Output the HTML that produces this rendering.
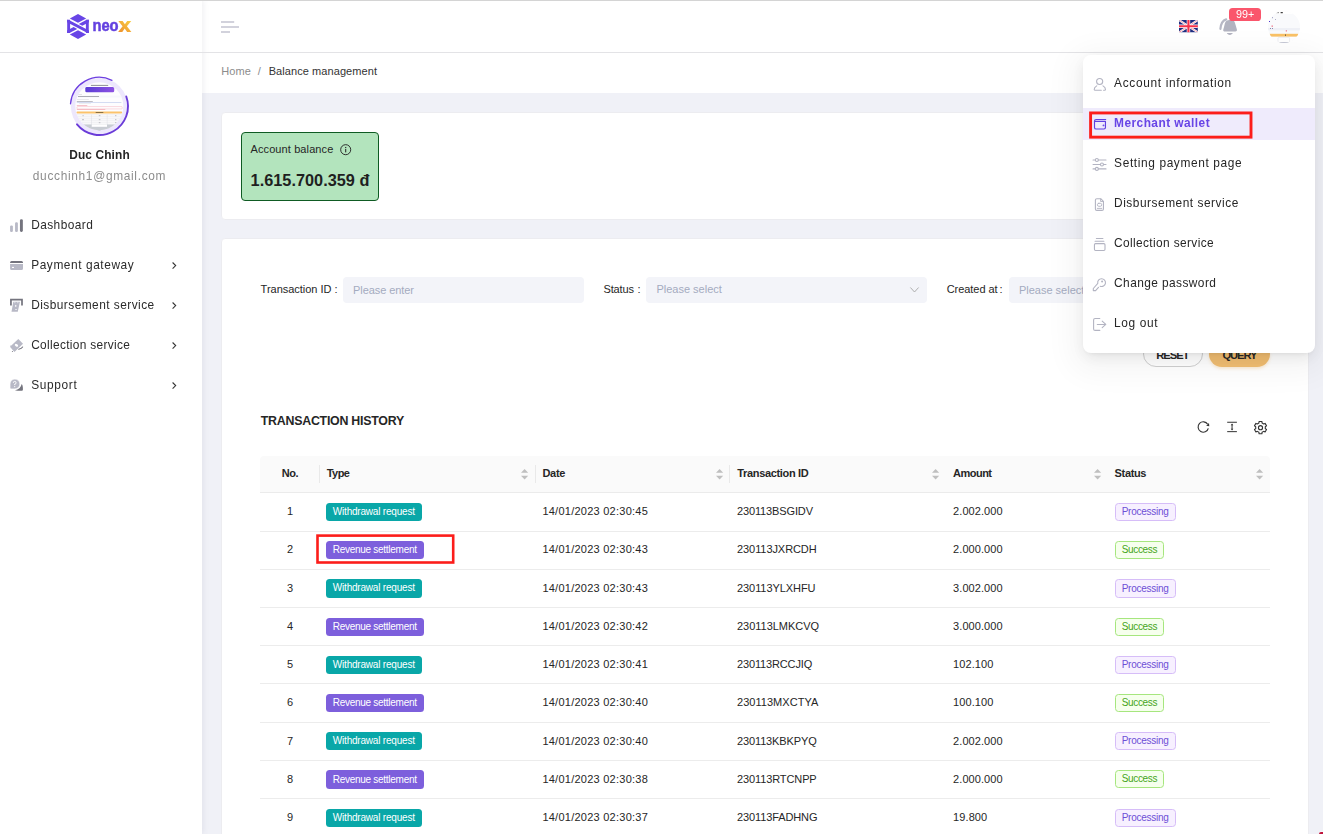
<!DOCTYPE html>
<html><head><meta charset="utf-8"><title>Balance management</title>
<style>
*{box-sizing:border-box;margin:0;padding:0}
html,body{width:1323px;height:834px;overflow:hidden}
body{background:#f0f1f7;font-family:"Liberation Sans",sans-serif;position:relative;color:#333}
.t{position:absolute;white-space:pre;line-height:20px;height:20px}
.abs{position:absolute}
svg{position:absolute;overflow:visible}
#wrap{position:absolute;left:0;top:0;width:1323px;height:834px;overflow:hidden;filter:blur(0.3px)}
</style></head><body><div id="wrap">
<div style="position:absolute;left:202px;top:53px;width:1121px;height:40px;background:#fff"></div><div class="t " style="left:221.3px;top:61.30px;font-size:11px;font-weight:400;color:#8c8c8c;letter-spacing:0.052px;">Home</div><div class="t " style="left:257.8px;top:61.30px;font-size:11px;font-weight:400;color:#8c8c8c;letter-spacing:0.000px;">/</div><div class="t " style="left:268.7px;top:61.30px;font-size:11px;font-weight:400;color:#333;letter-spacing:0.076px;">Balance management</div><div style="position:absolute;left:221.4px;top:112.2px;width:1088px;height:108px;background:#fff;border-radius:4px;border:1px solid #ececf0"></div><div style="position:absolute;left:241px;top:131.8px;width:138.2px;height:69px;background:#b3e4bd;border:1px solid #0f5b23;border-radius:4px"></div><div class="t " style="left:250.5px;top:139.30px;font-size:11px;font-weight:400;color:#262626;letter-spacing:0.104px;">Account balance</div><svg style="left:339.8px;top:144px" width="11.4" height="11.4" viewBox="0 0 12 12"><circle cx="6" cy="6" r="5.3" fill="none" stroke="#262626" stroke-width="1"/><rect x="5.45" y="5.2" width="1.1" height="3.6" fill="#262626"/><rect x="5.4" y="3.1" width="1.2" height="1.2" fill="#262626"/></svg><div class="t " style="left:250.6px;top:169.50px;font-size:16.3px;font-weight:700;color:#1f1f1f;letter-spacing:0.015px;">1.615.700.359 đ</div><div style="position:absolute;left:221.4px;top:238.2px;width:1088px;height:620px;background:#fff;border-radius:4px;border:1px solid #ececf0"></div><div class="t " style="left:260.6px;top:279.20px;font-size:11px;font-weight:400;color:#262626;letter-spacing:-0.017px;">Transaction ID</div><div class="t " style="left:334.6px;top:279.20px;font-size:11px;font-weight:400;color:#262626;letter-spacing:0.000px;">:</div><div style="position:absolute;left:342.8px;top:277.3px;width:241.2px;height:25.4px;background:#f3f4f9;border-radius:4px"></div><div class="t " style="left:353.1px;top:280.20px;font-size:11px;font-weight:400;color:#a4abc0;letter-spacing:-0.079px;">Please enter</div><div class="t " style="left:603.5px;top:279.20px;font-size:11px;font-weight:400;color:#262626;letter-spacing:-0.138px;">Status</div><div class="t " style="left:637.6px;top:279.20px;font-size:11px;font-weight:400;color:#262626;letter-spacing:0.000px;">:</div><div style="position:absolute;left:645.7px;top:277.3px;width:281.1px;height:25.4px;background:#f3f4f9;border-radius:4px"></div><div class="t " style="left:656.4px;top:279.30px;font-size:11px;font-weight:400;color:#a4abc0;letter-spacing:0.005px;">Please select</div><svg style="left:910px;top:287px" width="9" height="6" viewBox="0 0 9 6"><path d="M0.4 0.5 L4.5 5 L8.6 0.5" fill="none" stroke="#a6a6a6" stroke-width="0.9"/></svg><div class="t " style="left:946.7px;top:279.20px;font-size:11px;font-weight:400;color:#262626;letter-spacing:-0.053px;">Created at</div><div class="t " style="left:999.4px;top:279.20px;font-size:11px;font-weight:400;color:#262626;letter-spacing:0.000px;">:</div><div style="position:absolute;left:1009.2px;top:277.3px;width:260.8px;height:25.4px;background:#f3f4f9;border-radius:4px"></div><div class="t " style="left:1018.9px;top:280.20px;font-size:11px;font-weight:400;color:#a4abc0;letter-spacing:0.005px;">Please select</div><div style="position:absolute;left:1143px;top:341px;width:59.8px;height:25.7px;border:1px solid #d0d0d0;border-radius:13px;background:#fff"></div><div class="t " style="left:1156.2px;top:345.40px;font-size:11.2px;font-weight:700;color:#262626;letter-spacing:-0.978px;">RESET</div><div style="position:absolute;left:1209.2px;top:341px;width:60.8px;height:25.7px;border-radius:13px;background:#f1bd70;box-shadow:0 2px 3px rgba(240,180,90,.25)"></div><div class="t " style="left:1222.4px;top:345.40px;font-size:11.2px;font-weight:700;color:#262626;letter-spacing:-1.044px;">QUERY</div><div class="t " style="left:260.8px;top:410.60px;font-size:12.4px;font-weight:700;color:#262626;letter-spacing:-0.256px;">TRANSACTION HISTORY</div><svg style="left:1190px;top:414px" width="84" height="26" viewBox="1190 414 84 26"><path d="M1208.32 428.35A5.2 5.2 0 1 1 1207.71 424.24" fill="none" stroke="#333" stroke-width="1.15"/><path d="M1209 423.1L1209.3 426.2L1206.2 425.7Z" fill="#333"/>
<path d="M1227.2 422.25H1236.9M1227.2 431.65H1236.9M1232.05 424.4V429.5" fill="none" stroke="#333" stroke-width="1"/><path d="M1230.8 425.2L1232.05 423.5L1233.3 425.2ZM1230.8 428.7L1232.05 430.4L1233.3 428.7Z" fill="#333"/></svg><svg style="left:1254px;top:420.8px" width="13" height="13.4" viewBox="0 0 13 13.4"><path d="M5.06 0.57L7.94 0.57L8.06 2.05L9.74 3.03L11.09 2.39L12.53 4.88L11.30 5.73L11.30 7.67L12.53 8.52L11.09 11.01L9.74 10.37L8.06 11.35L7.94 12.83L5.06 12.83L4.94 11.35L3.26 10.37L1.91 11.01L0.47 8.52L1.70 7.67L1.70 5.73L0.47 4.88L1.91 2.39L3.26 3.03L4.94 2.05Z" fill="none" stroke="#333" stroke-width="1.1" stroke-linejoin="round"/><circle cx="6.5" cy="6.7" r="2.05" fill="none" stroke="#333" stroke-width="1.1"/></svg><div style="position:absolute;left:260px;top:456.1px;width:1010px;height:36.099999999999966px;background:#fafafa;border-radius:4px 4px 0 0"></div><div style="position:absolute;left:260px;top:492.2px;width:1010px;height:0.9px;background:#ebebeb"></div><div class="t " style="left:281.7px;top:463.20px;font-size:11px;font-weight:700;color:#262626;letter-spacing:-0.367px;">No.</div><div class="t " style="left:326.7px;top:463.20px;font-size:11px;font-weight:700;color:#262626;letter-spacing:-0.520px;">Type</div><svg style="left:521.4px;top:469px" width="7.2" height="10.6" viewBox="0 0 7.2 10.6"><path d="M3.6 0L7.2 3.8H0Z M0 6.8H7.2L3.6 10.6Z" fill="#bfbfbf"/></svg><div class="t " style="left:542.4px;top:463.20px;font-size:11px;font-weight:700;color:#262626;letter-spacing:-0.281px;">Date</div><svg style="left:715.8px;top:469px" width="7.2" height="10.6" viewBox="0 0 7.2 10.6"><path d="M3.6 0L7.2 3.8H0Z M0 6.8H7.2L3.6 10.6Z" fill="#bfbfbf"/></svg><div class="t " style="left:737.2px;top:463.20px;font-size:11px;font-weight:700;color:#262626;letter-spacing:-0.323px;">Transaction ID</div><svg style="left:931.8px;top:469px" width="7.2" height="10.6" viewBox="0 0 7.2 10.6"><path d="M3.6 0L7.2 3.8H0Z M0 6.8H7.2L3.6 10.6Z" fill="#bfbfbf"/></svg><div class="t " style="left:953.1px;top:463.20px;font-size:11px;font-weight:700;color:#262626;letter-spacing:-0.529px;">Amount</div><svg style="left:1093.9px;top:469px" width="7.2" height="10.6" viewBox="0 0 7.2 10.6"><path d="M3.6 0L7.2 3.8H0Z M0 6.8H7.2L3.6 10.6Z" fill="#bfbfbf"/></svg><div class="t " style="left:1114.6px;top:463.20px;font-size:11px;font-weight:700;color:#262626;letter-spacing:-0.345px;">Status</div><svg style="left:1255.8000000000002px;top:469px" width="7.2" height="10.6" viewBox="0 0 7.2 10.6"><path d="M3.6 0L7.2 3.8H0Z M0 6.8H7.2L3.6 10.6Z" fill="#bfbfbf"/></svg><div style="position:absolute;left:319.0px;top:465px;width:1px;height:17.6px;background:#e9e9e9"></div><div style="position:absolute;left:534.7px;top:465px;width:1px;height:17.6px;background:#e9e9e9"></div><div style="position:absolute;left:729.2px;top:465px;width:1px;height:17.6px;background:#e9e9e9"></div><div style="position:absolute;left:260px;top:530.75px;width:1010px;height:0.9px;background:#ececec"></div><div style="position:absolute;left:260px;top:568.9499999999999px;width:1010px;height:0.9px;background:#ececec"></div><div style="position:absolute;left:260px;top:607.05px;width:1010px;height:0.9px;background:#ececec"></div><div style="position:absolute;left:260px;top:645.05px;width:1010px;height:0.9px;background:#ececec"></div><div style="position:absolute;left:260px;top:683.15px;width:1010px;height:0.9px;background:#ececec"></div><div style="position:absolute;left:260px;top:721.55px;width:1010px;height:0.9px;background:#ececec"></div><div style="position:absolute;left:260px;top:759.8499999999999px;width:1010px;height:0.9px;background:#ececec"></div><div style="position:absolute;left:260px;top:797.8499999999999px;width:1010px;height:0.9px;background:#ececec"></div><div class="t " style="left:286.9375px;top:501.20px;font-size:11px;font-weight:400;color:#262626;letter-spacing:0.000px;">1</div><div style="position:absolute;left:326px;top:502.84999999999997px;width:96px;height:18.1px;background:#09a7a8;border-radius:3.5px"></div><div class="t " style="left:332.8px;top:501.80px;font-size:10px;font-weight:400;color:#fff;letter-spacing:-0.200px;">Withdrawal request</div><div class="t " style="left:542.4px;top:501.20px;font-size:11px;font-weight:400;color:#262626;letter-spacing:0.248px;">14/01/2023 02:30:45</div><div class="t " style="left:737px;top:501.20px;font-size:11px;font-weight:400;color:#262626;letter-spacing:-0.134px;">230113BSGIDV</div><div class="t " style="left:953.1px;top:501.20px;font-size:11px;font-weight:400;color:#262626;letter-spacing:0.058px;">2.002.000</div><div style="position:absolute;left:1115.2px;top:502.84999999999997px;width:60.8px;height:18.1px;background:#f7f0ff;border:1px solid #d6bdf8;border-radius:3.5px"></div><div class="t " style="left:1121.7px;top:501.90px;font-size:10px;font-weight:400;color:#6e4fd6;letter-spacing:-0.252px;">Processing</div><div class="t " style="left:286.9375px;top:539.20px;font-size:11px;font-weight:400;color:#262626;letter-spacing:0.000px;">2</div><div style="position:absolute;left:325.8px;top:540.95px;width:98.4px;height:18.1px;background:#7d5fdc;border-radius:3.5px"></div><div class="t " style="left:332.8px;top:540.10px;font-size:10px;font-weight:400;color:#fff;letter-spacing:-0.280px;">Revenue settlement</div><div class="t " style="left:542.4px;top:539.20px;font-size:11px;font-weight:400;color:#262626;letter-spacing:0.248px;">14/01/2023 02:30:43</div><div class="t " style="left:737px;top:539.20px;font-size:11px;font-weight:400;color:#262626;letter-spacing:-0.074px;">230113JXRCDH</div><div class="t " style="left:953.1px;top:539.20px;font-size:11px;font-weight:400;color:#262626;letter-spacing:0.058px;">2.000.000</div><div style="position:absolute;left:1115.2px;top:540.8500000000001px;width:49px;height:18.1px;background:#f6ffed;border:1px solid #a6e67e;border-radius:3.5px"></div><div class="t " style="left:1121.7px;top:539.90px;font-size:10px;font-weight:400;color:#45a51a;letter-spacing:-0.333px;">Success</div><div class="t " style="left:286.9375px;top:577.80px;font-size:11px;font-weight:400;color:#262626;letter-spacing:0.000px;">3</div><div style="position:absolute;left:326px;top:579.45px;width:96px;height:18.1px;background:#09a7a8;border-radius:3.5px"></div><div class="t " style="left:332.8px;top:578.40px;font-size:10px;font-weight:400;color:#fff;letter-spacing:-0.200px;">Withdrawal request</div><div class="t " style="left:542.4px;top:577.80px;font-size:11px;font-weight:400;color:#262626;letter-spacing:0.248px;">14/01/2023 02:30:43</div><div class="t " style="left:737px;top:577.80px;font-size:11px;font-weight:400;color:#262626;letter-spacing:-0.072px;">230113YLXHFU</div><div class="t " style="left:953.1px;top:577.80px;font-size:11px;font-weight:400;color:#262626;letter-spacing:0.058px;">3.002.000</div><div style="position:absolute;left:1115.2px;top:579.45px;width:60.8px;height:18.1px;background:#f7f0ff;border:1px solid #d6bdf8;border-radius:3.5px"></div><div class="t " style="left:1121.7px;top:578.50px;font-size:10px;font-weight:400;color:#6e4fd6;letter-spacing:-0.252px;">Processing</div><div class="t " style="left:286.9375px;top:616.10px;font-size:11px;font-weight:400;color:#262626;letter-spacing:0.000px;">4</div><div style="position:absolute;left:325.8px;top:617.85px;width:98.4px;height:18.1px;background:#7d5fdc;border-radius:3.5px"></div><div class="t " style="left:332.8px;top:617.00px;font-size:10px;font-weight:400;color:#fff;letter-spacing:-0.280px;">Revenue settlement</div><div class="t " style="left:542.4px;top:616.10px;font-size:11px;font-weight:400;color:#262626;letter-spacing:0.248px;">14/01/2023 02:30:42</div><div class="t " style="left:737px;top:616.10px;font-size:11px;font-weight:400;color:#262626;letter-spacing:-0.024px;">230113LMKCVQ</div><div class="t " style="left:953.1px;top:616.10px;font-size:11px;font-weight:400;color:#262626;letter-spacing:0.058px;">3.000.000</div><div style="position:absolute;left:1115.2px;top:617.7500000000001px;width:49px;height:18.1px;background:#f6ffed;border:1px solid #a6e67e;border-radius:3.5px"></div><div class="t " style="left:1121.7px;top:616.80px;font-size:10px;font-weight:400;color:#45a51a;letter-spacing:-0.333px;">Success</div><div class="t " style="left:286.9375px;top:654.20px;font-size:11px;font-weight:400;color:#262626;letter-spacing:0.000px;">5</div><div style="position:absolute;left:326px;top:655.8500000000001px;width:96px;height:18.1px;background:#09a7a8;border-radius:3.5px"></div><div class="t " style="left:332.8px;top:654.80px;font-size:10px;font-weight:400;color:#fff;letter-spacing:-0.200px;">Withdrawal request</div><div class="t " style="left:542.4px;top:654.20px;font-size:11px;font-weight:400;color:#262626;letter-spacing:0.248px;">14/01/2023 02:30:41</div><div class="t " style="left:737px;top:654.20px;font-size:11px;font-weight:400;color:#262626;letter-spacing:-0.149px;">230113RCCJIQ</div><div class="t " style="left:953.1px;top:654.20px;font-size:11px;font-weight:400;color:#262626;letter-spacing:0.072px;">102.100</div><div style="position:absolute;left:1115.2px;top:655.8500000000001px;width:60.8px;height:18.1px;background:#f7f0ff;border:1px solid #d6bdf8;border-radius:3.5px"></div><div class="t " style="left:1121.7px;top:654.90px;font-size:10px;font-weight:400;color:#6e4fd6;letter-spacing:-0.252px;">Processing</div><div class="t " style="left:286.9375px;top:692.30px;font-size:11px;font-weight:400;color:#262626;letter-spacing:0.000px;">6</div><div style="position:absolute;left:325.8px;top:694.05px;width:98.4px;height:18.1px;background:#7d5fdc;border-radius:3.5px"></div><div class="t " style="left:332.8px;top:693.20px;font-size:10px;font-weight:400;color:#fff;letter-spacing:-0.280px;">Revenue settlement</div><div class="t " style="left:542.4px;top:692.30px;font-size:11px;font-weight:400;color:#262626;letter-spacing:0.248px;">14/01/2023 02:30:40</div><div class="t " style="left:737px;top:692.30px;font-size:11px;font-weight:400;color:#262626;letter-spacing:0.034px;">230113MXCTYA</div><div class="t " style="left:953.1px;top:692.30px;font-size:11px;font-weight:400;color:#262626;letter-spacing:0.072px;">100.100</div><div style="position:absolute;left:1115.2px;top:693.95px;width:49px;height:18.1px;background:#f6ffed;border:1px solid #a6e67e;border-radius:3.5px"></div><div class="t " style="left:1121.7px;top:693.00px;font-size:10px;font-weight:400;color:#45a51a;letter-spacing:-0.333px;">Success</div><div class="t " style="left:286.9375px;top:730.50px;font-size:11px;font-weight:400;color:#262626;letter-spacing:0.000px;">7</div><div style="position:absolute;left:326px;top:732.1500000000001px;width:96px;height:18.1px;background:#09a7a8;border-radius:3.5px"></div><div class="t " style="left:332.8px;top:731.10px;font-size:10px;font-weight:400;color:#fff;letter-spacing:-0.200px;">Withdrawal request</div><div class="t " style="left:542.4px;top:730.50px;font-size:11px;font-weight:400;color:#262626;letter-spacing:0.248px;">14/01/2023 02:30:40</div><div class="t " style="left:737px;top:730.50px;font-size:11px;font-weight:400;color:#262626;letter-spacing:-0.131px;">230113KBKPYQ</div><div class="t " style="left:953.1px;top:730.50px;font-size:11px;font-weight:400;color:#262626;letter-spacing:0.058px;">2.002.000</div><div style="position:absolute;left:1115.2px;top:732.1500000000001px;width:60.8px;height:18.1px;background:#f7f0ff;border:1px solid #d6bdf8;border-radius:3.5px"></div><div class="t " style="left:1121.7px;top:731.20px;font-size:10px;font-weight:400;color:#6e4fd6;letter-spacing:-0.252px;">Processing</div><div class="t " style="left:286.9375px;top:768.70px;font-size:11px;font-weight:400;color:#262626;letter-spacing:0.000px;">8</div><div style="position:absolute;left:325.8px;top:770.45px;width:98.4px;height:18.1px;background:#7d5fdc;border-radius:3.5px"></div><div class="t " style="left:332.8px;top:769.60px;font-size:10px;font-weight:400;color:#fff;letter-spacing:-0.280px;">Revenue settlement</div><div class="t " style="left:542.4px;top:768.70px;font-size:11px;font-weight:400;color:#262626;letter-spacing:0.248px;">14/01/2023 02:30:38</div><div class="t " style="left:737px;top:768.70px;font-size:11px;font-weight:400;color:#262626;letter-spacing:-0.111px;">230113RTCNPP</div><div class="t " style="left:953.1px;top:768.70px;font-size:11px;font-weight:400;color:#262626;letter-spacing:0.058px;">2.000.000</div><div style="position:absolute;left:1115.2px;top:770.3500000000001px;width:49px;height:18.1px;background:#f6ffed;border:1px solid #a6e67e;border-radius:3.5px"></div><div class="t " style="left:1121.7px;top:769.40px;font-size:10px;font-weight:400;color:#45a51a;letter-spacing:-0.333px;">Success</div><div class="t " style="left:286.9375px;top:807.20px;font-size:11px;font-weight:400;color:#262626;letter-spacing:0.000px;">9</div><div style="position:absolute;left:326px;top:808.8500000000001px;width:96px;height:18.1px;background:#09a7a8;border-radius:3.5px"></div><div class="t " style="left:332.8px;top:807.80px;font-size:10px;font-weight:400;color:#fff;letter-spacing:-0.200px;">Withdrawal request</div><div class="t " style="left:542.4px;top:807.20px;font-size:11px;font-weight:400;color:#262626;letter-spacing:0.248px;">14/01/2023 02:30:37</div><div class="t " style="left:737px;top:807.20px;font-size:11px;font-weight:400;color:#262626;letter-spacing:-0.112px;">230113FADHNG</div><div class="t " style="left:953.1px;top:807.20px;font-size:11px;font-weight:400;color:#262626;letter-spacing:0.089px;">19.800</div><div style="position:absolute;left:1115.2px;top:808.8500000000001px;width:60.8px;height:18.1px;background:#f7f0ff;border:1px solid #d6bdf8;border-radius:3.5px"></div><div class="t " style="left:1121.7px;top:807.90px;font-size:10px;font-weight:400;color:#6e4fd6;letter-spacing:-0.252px;">Processing</div><svg style="left:312px;top:530px" width="148" height="38" viewBox="312 530 148 38"><rect x="317.5" y="535.6" width="135.7" height="26.9" fill="none" stroke="#fc1d1a" stroke-width="2.6"/></svg><div style="position:absolute;left:202px;top:0px;width:1121px;height:52.2px;background:#fff"></div><div style="position:absolute;left:0px;top:0px;width:202px;height:834px;background:#fff;box-shadow:1px 0 6px rgba(90,90,120,.10)"></div><div style="position:absolute;left:0px;top:52px;width:1323px;height:1px;background:#e3e3e6"></div><div style="position:absolute;left:0px;top:0px;width:1323px;height:1.2px;background:#d4d4d4"></div><svg style="left:60px;top:10px" width="36" height="32" viewBox="60 10 36 32"><defs><clipPath id="hx"><path d="M67.10 19.80L88.88 19.80L88.88 33.05L67.10 33.05Z"/></clipPath></defs><g fill="#6845e6"><path d="M77.99 13.90L86.15 18.43L77.99 22.70L69.83 18.43Z"/><path d="M77.99 38.94L69.83 34.41L77.99 30.14L86.15 34.41Z"/><g clip-path="url(#hx)"><path d="M66.00 18.53L90.00 31.06L90.00 34.32L66.00 21.79Z"/><path d="M67.10 19.00L70.10 19.00L70.10 34.00L67.10 34.00Z"/><path d="M85.88 19.00L88.88 19.00L88.88 34.00L85.88 34.00Z"/><path d="M66.00 31.07L73.64 27.03L77.21 28.90L66.00 34.84Z"/><path d="M89.98 21.77L82.34 25.81L78.77 23.94L89.98 18.00Z"/></g></g></svg><svg style="left:92px;top:18px" width="42" height="18" viewBox="0 0 42 18">
<defs><linearGradient id="og" x1="0" y1="1" x2="1" y2="0"><stop offset="0" stop-color="#ee8f2c"/><stop offset="1" stop-color="#f9cf45"/></linearGradient></defs>
<text x="0.4" y="13" font-family="Liberation Sans" font-weight="700" font-size="16.5" fill="#6341e0" stroke="#6341e0" stroke-width="0.5" textLength="26.2" lengthAdjust="spacingAndGlyphs">neo</text>
<path d="M26.3 2.9H30.6L32.9 6.3L35.2 2.9H39.3L34.9 8.3L39.4 13.9H35.1L32.7 10.4L30.3 13.9H26.1L30.6 8.3Z" fill="url(#og)"/>
</svg><svg style="left:69px;top:76px" width="61" height="61" viewBox="0 0 61 61">
<defs><clipPath id="av"><circle cx="30.3" cy="30.3" r="24"/></clipPath>
<linearGradient id="pg" x1="0" y1="0" x2="1" y2="0"><stop offset="0" stop-color="#5a3dd6"/><stop offset="1" stop-color="#8d52e2"/></linearGradient></defs>
<circle cx="30.3" cy="30.3" r="28.4" fill="#ede7fd"/>
<path d="M1.51 27.78A28.9 28.9 0 0 1 42.97 4.32" fill="none" stroke="#6d3fe0" stroke-width="1.3" stroke-linecap="round"/>
<path d="M57.27 20.48A28.7 28.7 0 0 1 8.00 48.36" fill="none" stroke="#6a3bd8" stroke-width="1.9" stroke-linecap="round"/>
<g clip-path="url(#av)">
<rect x="0" y="0" width="61" height="61" fill="#fdfdfe"/>
<rect x="21.9" y="8.9" width="17.3" height="0.9" fill="#80808a"/>
<rect x="16.3" y="11.05" width="28.9" height="5.25" rx="1.4" fill="url(#pg)"/>
<rect x="9" y="18.3" width="4" height="0.5" fill="#c9c9d2"/>
<rect x="8.8" y="19.6" width="44" height="1.9" fill="#f6f8fb"/>
<rect x="9" y="20.2" width="21" height="0.7" fill="#8b8b95"/>
<rect x="7.8" y="23.3" width="12" height="0.5" fill="#d5d5dc"/>
<rect x="7.8" y="25" width="16" height="0.7" fill="#a3a3ad"/>
<rect x="7.8" y="26.2" width="44.6" height="0.6" fill="#b9c6ea"/>
<rect x="10" y="27.4" width="12" height="0.5" fill="#dcdce2"/>
<rect x="7.8" y="29.3" width="10.5" height="0.6" fill="#f29aa6"/>
<rect x="8" y="30.6" width="45.2" height="2.3" rx="0.6" fill="#fff" stroke="#f5b3bc" stroke-width="0.5"/>
<rect x="7.8" y="33.2" width="28.5" height="0.6" fill="#f29aa6"/>
<rect x="7.4" y="35.55" width="45.8" height="2.05" rx="1" fill="#fbc36b"/>
<rect x="26.7" y="36.2" width="7.6" height="0.7" fill="#5b4a2a"/>
<g stroke="#dcdde2" stroke-width="0.5"><path d="M7.8 38.8H53M7.8 40.8H53M9 42.8H52M11 44.8H50M13 46.8H48M22.5 38.5V51M38.2 38.5V51"/></g>
<g fill="#9a9aa3"><rect x="13.5" y="39.5" width="1.2" height="0.6"/><rect x="29.8" y="39.5" width="1.6" height="0.6"/><rect x="46" y="39.5" width="1.4" height="0.6"/><rect x="13" y="43.5" width="2" height="0.6"/><rect x="29.8" y="43.5" width="1.6" height="0.6"/><rect x="46" y="43.5" width="1.4" height="0.6"/><rect x="29.8" y="46.5" width="1.6" height="0.6"/><rect x="46" y="46.5" width="1.4" height="0.6"/></g>
<rect x="0" y="48.4" width="61" height="10" fill="#c9cdd3"/>
<rect x="22.7" y="48.4" width="15.3" height="2.4" fill="#fff"/>
<rect x="25.2" y="54.1" width="10.4" height="0.7" fill="#5f6068"/>
</g></svg><div class="t " style="left:69.2px;top:145.10px;font-size:11.9px;font-weight:700;color:#262626;letter-spacing:0.131px;">Duc Chinh</div><div class="t " style="left:32.8px;top:166.40px;font-size:11.9px;font-weight:400;color:#8c8c8c;letter-spacing:0.680px;">ducchinh1@gmail.com</div><div class="t " style="left:31.2px;top:215.25px;font-size:11.9px;font-weight:400;color:#2b2b2b;letter-spacing:0.429px;">Dashboard</div><div class="t " style="left:31.2px;top:255.35px;font-size:11.9px;font-weight:400;color:#2b2b2b;letter-spacing:0.570px;">Payment gateway</div><svg style="left:172.2px;top:261.7px" width="4.4" height="7.2" viewBox="0 0 4.4 7.2"><path d="M0.6 0.5L3.7 3.6L0.6 6.7" fill="none" stroke="#333" stroke-width="1.1"/></svg><div class="t " style="left:31.2px;top:295.35px;font-size:11.9px;font-weight:400;color:#2b2b2b;letter-spacing:0.456px;">Disbursement service</div><svg style="left:172.2px;top:301.7px" width="4.4" height="7.2" viewBox="0 0 4.4 7.2"><path d="M0.6 0.5L3.7 3.6L0.6 6.7" fill="none" stroke="#333" stroke-width="1.1"/></svg><div class="t " style="left:31.2px;top:335.35px;font-size:11.9px;font-weight:400;color:#2b2b2b;letter-spacing:0.330px;">Collection service</div><svg style="left:172.2px;top:341.7px" width="4.4" height="7.2" viewBox="0 0 4.4 7.2"><path d="M0.6 0.5L3.7 3.6L0.6 6.7" fill="none" stroke="#333" stroke-width="1.1"/></svg><div class="t " style="left:31.2px;top:375.35px;font-size:11.9px;font-weight:400;color:#2b2b2b;letter-spacing:0.641px;">Support</div><svg style="left:172.2px;top:381.7px" width="4.4" height="7.2" viewBox="0 0 4.4 7.2"><path d="M0.6 0.5L3.7 3.6L0.6 6.7" fill="none" stroke="#333" stroke-width="1.1"/></svg><svg style="left:4px;top:214px" width="26" height="184" viewBox="4 214 26 184">
<rect x="10.08" y="225.4" width="2.8" height="6.5" rx="1.2" fill="#b8b9c6"/><rect x="15.07" y="222.26" width="2.8" height="9.64" rx="1.2" fill="#b8b9c6"/><rect x="19.95" y="219.14" width="2.9" height="12.76" rx="1.3" fill="#74747e"/>
<path d="M11.6 260.9H21.5A1.5 1.5 0 0 1 23 262.4V262.95H10.08V262.4A1.5 1.5 0 0 1 11.6 260.9Z" fill="#74747e"/>
<path d="M10.08 264H23V268.6A1.5 1.5 0 0 1 21.5 270.1H11.6A1.5 1.5 0 0 1 10.08 268.6Z" fill="#b8b9c6"/><rect x="11.95" y="266.9" width="2.05" height="1.05" fill="#fff"/>
<path d="M10.08 298.86H22.86V305.4H21.15V300.6H11.8V305.4H10.08Z" fill="#74747e"/>
<path d="M13.3 301.7H19.95L17.75 311.65H11.5Z" fill="#b8b9c6"/><path d="M15.75 304.7L16.7 305.9L15.75 307.1L14.8 305.9Z" fill="#fff"/><rect x="15.2" y="309.2" width="1.7" height="0.7" fill="#fff"/><path d="M14.6 301.7H15.2V303.2H14.6ZM17.6 301.7H18.2V303.2H17.6Z" fill="#fff"/>
<path d="M18.34 339L23 343.7L14.44 351.95L9.92 346.65Z" fill="#b8b9c6"/><ellipse cx="16.47" cy="345.25" rx="1.85" ry="1.25" transform="rotate(35 16.47 345.25)" fill="#fff"/>
<path d="M18.7 349.2C20.4 349 21.9 348.4 22.6 347.1" fill="none" stroke="#74747e" stroke-width="1.1" stroke-linecap="round"/><circle cx="12.4" cy="351.5" r="0.55" fill="#74747e"/><circle cx="10.6" cy="345.3" r="0.4" fill="#b8b9c6"/>
<path d="M21.7 384C22.5 385 22.9 386.5 22.9 388V389.8A1 1 0 0 1 21.9 390.8H17.5C16.5 390.8 15.6 390.6 15 390.3C18.5 389.7 21 387.3 21.7 384Z" fill="#74747e"/>
<path d="M14.95 379.05A4.95 4.95 0 1 1 14.95 388.95H11A1 1 0 0 1 10 387.95V384A4.95 4.95 0 0 1 14.95 379.05Z" fill="#b8b9c6" stroke="#fff" stroke-width="0.7"/>
<path d="M13.35 382.8A1.35 1.35 0 1 1 14.7 384.1V385.1" fill="none" stroke="#fff" stroke-width="0.95"/><circle cx="14.7" cy="386.6" r="0.6" fill="#fff"/>
</svg><svg style="left:221px;top:20.6px" width="18.2" height="12" viewBox="0 0 18.2 12"><path d="M0 1H13.2M0 6H18M0 11H9" stroke="#c3c3d1" stroke-width="1.5" fill="none"/></svg><svg style="left:1179.1px;top:20.4px" width="18.9" height="12.5" viewBox="0 0 60 40" preserveAspectRatio="none"><defs><clipPath id="fl"><rect width="60" height="40" rx="5"/></clipPath></defs><g clip-path="url(#fl)"><rect width="60" height="40" fill="#1f2d80"/><path d="M0 0L60 40M60 0L0 40" stroke="#fff" stroke-width="6.5"/><path d="M0 0L60 40M60 0L0 40" stroke="#f7324a" stroke-width="2.2" stroke-dasharray="3 1.6"/><path d="M30 0V40M0 20H60" stroke="#fff" stroke-width="11"/><path d="M30 0V40M0 20H60" stroke="#f7324a" stroke-width="6.8"/></g></svg><svg style="left:1212px;top:4px" width="56" height="36" viewBox="1212 4 56 36"><path d="M1220.4 28.9C1220.8 24.2 1222.4 20.6 1226.2 19.4" fill="none" stroke="#b7b8c5" stroke-width="2.2" stroke-linecap="round"/><path d="M1225.2 31.6C1223.6 31.6 1222.9 30.7 1223.3 29.4C1224.1 27 1224.4 25 1224.9 23.2C1225.5 21 1227.3 19.9 1229.3 19.9L1233 19.9C1234.6 21.3 1235.2 23 1235.6 25L1236.9 29.6C1237.2 30.8 1236.5 31.6 1235.3 31.6Z" fill="#b2b3c0"/><path d="M1226.8 33.1H1232.8C1232.3 34.3 1231.2 34.9 1229.8 34.9C1228.4 34.9 1227.3 34.3 1226.8 33.1Z" fill="#b2b3c0"/></svg><div style="position:absolute;left:1229px;top:7.9px;width:32px;height:13.1px;background:#fa566c;border-radius:3.6px"></div><svg style="left:1229px;top:7.9px" width="32" height="13.1" viewBox="0 0 32 13.1"><text x="6.9" y="10.15" font-family="Liberation Sans" font-size="10.3" fill="#fff" textLength="18.3" lengthAdjust="spacingAndGlyphs">99+</text></svg><svg style="left:1268px;top:10.8px" width="32" height="32" viewBox="0 0 32 32"><defs><clipPath id="a2"><circle cx="16" cy="16" r="16"/></clipPath></defs><g clip-path="url(#a2)"><rect width="32" height="32" fill="#f9fafc"/><rect x="0" y="0" width="32" height="3" fill="#fff"/><rect x="0" y="17" width="32" height="2.4" fill="#eef0f6"/><rect x="1.6" y="22.8" width="28.8" height="2.8" fill="#f9c166"/><rect x="0" y="26" width="32" height="6" fill="#fff"/><rect x="10" y="26.4" width="11.6" height="5.2" rx="1" fill="#fff" stroke="#e1e3ea" stroke-width="0.6"/><rect x="10.6" y="31" width="10.4" height="0.8" fill="#b9bccb"/><rect x="8" y="1.4" width="3" height="0.7" fill="#555"/><rect x="12.6" y="1.2" width="2.2" height="1" fill="#111"/><rect x="1" y="10" width="1" height="1" fill="#4a2fd0"/><rect x="3.6" y="14.6" width="1.2" height="1" fill="#e8364f"/><rect x="17.8" y="19.4" width="1" height="1" fill="#e8364f"/><rect x="4" y="6.2" width="1" height="1" fill="#9a9ac0"/><rect x="7" y="8" width="1" height="1" fill="#b0b0c8"/><rect x="2" y="17" width="1" height="1" fill="#8a8ab0"/><rect x="4" y="17" width="1" height="1" fill="#8a8ab0"/><rect x="17" y="23.6" width="1" height="1" fill="#333"/></g></svg><div style="position:absolute;left:1083px;top:54.5px;width:232px;height:298px;background:#fff;border-radius:8px;box-shadow:0 5px 15px rgba(0,0,0,.07),0 3px 6px -4px rgba(0,0,0,.12),0 8px 30px 12px rgba(0,0,0,.045)"></div><div style="position:absolute;left:1083px;top:108px;width:232px;height:31.8px;background:#efebfc"></div><div class="t " style="left:1114.1px;top:73.00px;font-size:11.9px;font-weight:400;color:#262626;letter-spacing:0.667px;">Account information</div><div class="t " style="left:1114.1px;top:113.00px;font-size:11.9px;font-weight:700;color:#6845e6;letter-spacing:0.450px;">Merchant wallet</div><div class="t " style="left:1114.1px;top:153.00px;font-size:11.9px;font-weight:400;color:#262626;letter-spacing:0.622px;">Setting payment page</div><div class="t " style="left:1114.1px;top:193.00px;font-size:11.9px;font-weight:400;color:#262626;letter-spacing:0.520px;">Disbursement service</div><div class="t " style="left:1114.1px;top:233.00px;font-size:11.9px;font-weight:400;color:#262626;letter-spacing:0.371px;">Collection service</div><div class="t " style="left:1114.1px;top:273.00px;font-size:11.9px;font-weight:400;color:#262626;letter-spacing:0.424px;">Change password</div><div class="t " style="left:1114.1px;top:313.00px;font-size:11.9px;font-weight:400;color:#262626;letter-spacing:0.635px;">Log out</div><svg style="left:1088px;top:72px" width="24" height="264" viewBox="1088 72 24 264"><g fill="none" stroke="#b3b4c2" stroke-width="1.1" stroke-linecap="round" stroke-linejoin="round">
<circle cx="1099.65" cy="81.5" r="3.05"/>
<path d="M1096.7 85.9C1095.2 86.8 1094.2 88.2 1094.2 89.4C1094.2 90 1094.6 90.3 1095.2 90.3H1101.3M1103.6 90.3H1104.5C1105.1 90.3 1105.5 90 1105.5 89.4C1105.5 88.2 1104.5 86.8 1103 85.9"/>
<path d="M1093.04 160H1095.3M1098.4 160H1106M1093.04 164.46H1100.4M1103.5 164.46H1106M1093.04 168.92H1095.3M1098.4 168.92H1106"/>
<circle cx="1096.86" cy="160" r="1.5"/><circle cx="1101.96" cy="164.46" r="1.5"/><circle cx="1096.86" cy="168.92" r="1.5"/>
<path d="M1096.8 198.7H1100.7L1103.45 201.4V208.9A1.45 1.45 0 0 1 1102 210.35H1096.8A1.45 1.45 0 0 1 1095.4 208.9V200.1A1.45 1.45 0 0 1 1096.8 198.7Z"/>
<path d="M1100.6 199V201.5H1103.2" stroke-width="0.9"/>
<rect x="1097.4" y="203.3" width="4.3" height="3" rx="1.4" stroke-width="0.9"/>
<path d="M1097.3 208.4H1101.8" stroke-width="0.9"/>
<path d="M1096.4 238.5H1102.9M1095.1 241.2H1103.9"/>
<rect x="1094.45" y="243.65" width="10.55" height="6.8" rx="1.1"/>
<path d="M1100.14 286.22A3.9 3.9 0 1 0 1097.8 283.48L1093.3 288.5V290.6H1095.6L1098.5 287.3"/>
<circle cx="1102.1" cy="281.5" r="0.45" fill="#b3b4c2"/>
<path d="M1099.8 318.5H1095.1A1.5 1.5 0 0 0 1093.6 320V328.9A1.5 1.5 0 0 0 1095.1 330.4H1099.8"/>
<path d="M1097.3 324.46H1105.6M1102.2 321.2L1105.8 324.46L1102.2 327.7"/>
</g>
<g fill="none" stroke="#6141e2" stroke-width="1.15" stroke-linecap="round" stroke-linejoin="round">
<path d="M1105.7 119.45H1096.1C1095.1 119.45 1094.5 120.1 1094.5 121V127.4C1094.5 128.4 1095.2 129 1096.1 129H1104C1104.9 129 1105.45 128.4 1105.45 127.6V121.4H1094.8"/>
<circle cx="1103.5" cy="125.4" r="0.35" fill="#6141e2"/>
</g></svg><svg style="left:1085px;top:108px" width="172" height="34" viewBox="1085 108 172 34"><rect x="1090.6" y="112.95" width="160.4" height="24.2" fill="none" stroke="#fc1d1a" stroke-width="2.9"/></svg><div style="position:absolute;left:1319.3px;top:832.3px;width:4px;height:1.7px;background:#bf143c;border-radius:2px 0 0 0;box-shadow:0 -0.6px 0 #fff"></div></div></body></html>
